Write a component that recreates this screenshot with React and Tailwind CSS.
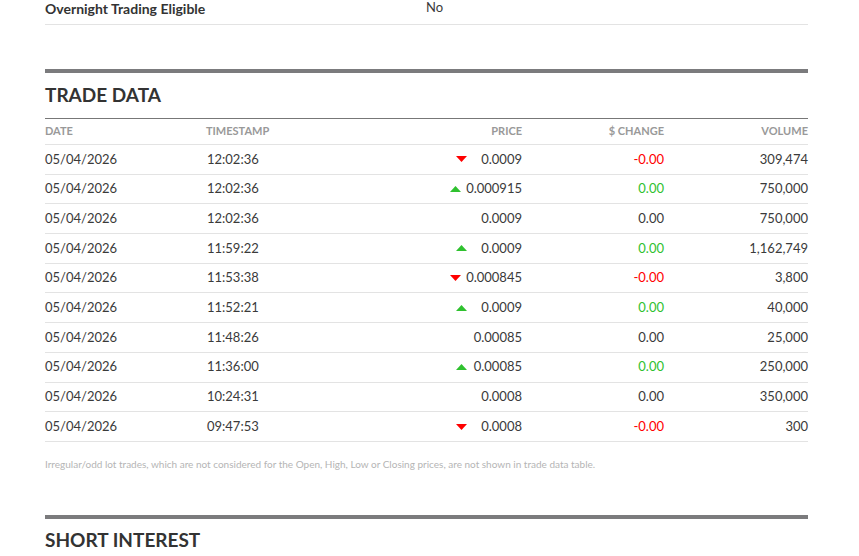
import React from 'react';

const rows = [
  ['12:02:36', 'down', '0.0009', '-0.00', '309,474'],
  ['12:02:36', 'up', '0.000915', '0.00', '750,000'],
  ['12:02:36', null, '0.0009', '0.00n', '750,000'],
  ['11:59:22', 'up', '0.0009', '0.00', '1,162,749'],
  ['11:53:38', 'down', '0.000845', '-0.00', '3,800'],
  ['11:52:21', 'up', '0.0009', '0.00', '40,000'],
  ['11:48:26', null, '0.00085', '0.00n', '25,000'],
  ['11:36:00', 'up', '0.00085', '0.00', '250,000'],
  ['10:24:31', null, '0.0008', '0.00n', '350,000'],
  ['09:47:53', 'down', '0.0008', '-0.00', '300'],
];

function Arrow({ dir }) {
  if (!dir) return null;
  return dir === 'up' ? (
    <svg width="11" height="6" viewBox="0 0 11 6" className="mr-[5px]"><polygon points="0,6 11,6 5.5,0" fill="#2fc12f" /></svg>
  ) : (
    <svg width="11" height="6" viewBox="0 0 11 6" className="mr-[5px]"><polygon points="0,0 11,0 5.5,6" fill="#f00" /></svg>
  );
}

export default function App() {
  return (
    <div className="w-[859px] h-[556px] overflow-hidden bg-white text-[#3a3a3a]" style={{ fontFamily: 'Lato, "Noto Sans", sans-serif' }}>
      <div className="ml-[45px] w-[763px] -mt-[8px]">
        <div className="flex h-[33px] items-center border-b border-[#e3e3e3] text-[13px]">
          <div className="w-[381px] text-[14px] font-bold text-[#333]">Overnight Trading Eligible</div>
          <div>No</div>
        </div>
        <div className="mt-[44px] h-[4px] bg-[#7b7b7d]" />
        <div className="h-[45px] flex items-center text-[19px] font-bold text-[#333]">TRADE DATA</div>
        <div className="border-t border-[#777]">
          <div className="flex h-[26px] items-center border-b border-[#e3e3e3] text-[11px] font-bold text-[#999]">
            <div className="w-[161px]">DATE</div>
            <div className="w-[150px]">TIMESTAMP</div>
            <div className="w-[166px] text-right">PRICE</div>
            <div className="w-[142px] text-right">$ CHANGE</div>
            <div className="flex-1 text-right">VOLUME</div>
          </div>
          {rows.map((r, i) => {
            const neutral = r[3].endsWith('n');
            const chg = r[3].replace('n', '');
            const color = neutral ? 'text-[#3a3a3a]' : chg.startsWith('-') ? 'text-[#f00]' : 'text-[#2fc12f]';
            return (
              <div key={i} className="flex h-[29.7px] items-center border-b border-[#e3e3e3] text-[13px]">
                <div className="w-[161px]">05/04/2026</div>
                <div className="w-[150px] pl-[1px]">{r[0]}</div>
                <div className="w-[166px] flex items-center justify-end">
                  <Arrow dir={r[1]} />
                  <span className="inline-block min-w-[50px] text-right">{r[2]}</span>
                </div>
                <div className={`w-[142px] text-right ${color}`}>{chg}</div>
                <div className="flex-1 text-right">{r[4]}</div>
              </div>
            );
          })}
        </div>
        <div className="mt-[15px] text-[10px] text-[#b5b5b5]">
          Irregular/odd lot trades, which are not considered for the Open, High, Low or Closing prices, are not shown in trade data table.
        </div>
        <div className="mt-[43px] h-[4px] bg-[#7b7b7d]" />
        <div className="h-[43px] flex items-center text-[19px] font-bold text-[#333]">SHORT INTEREST</div>
      </div>
    </div>
  );
}
